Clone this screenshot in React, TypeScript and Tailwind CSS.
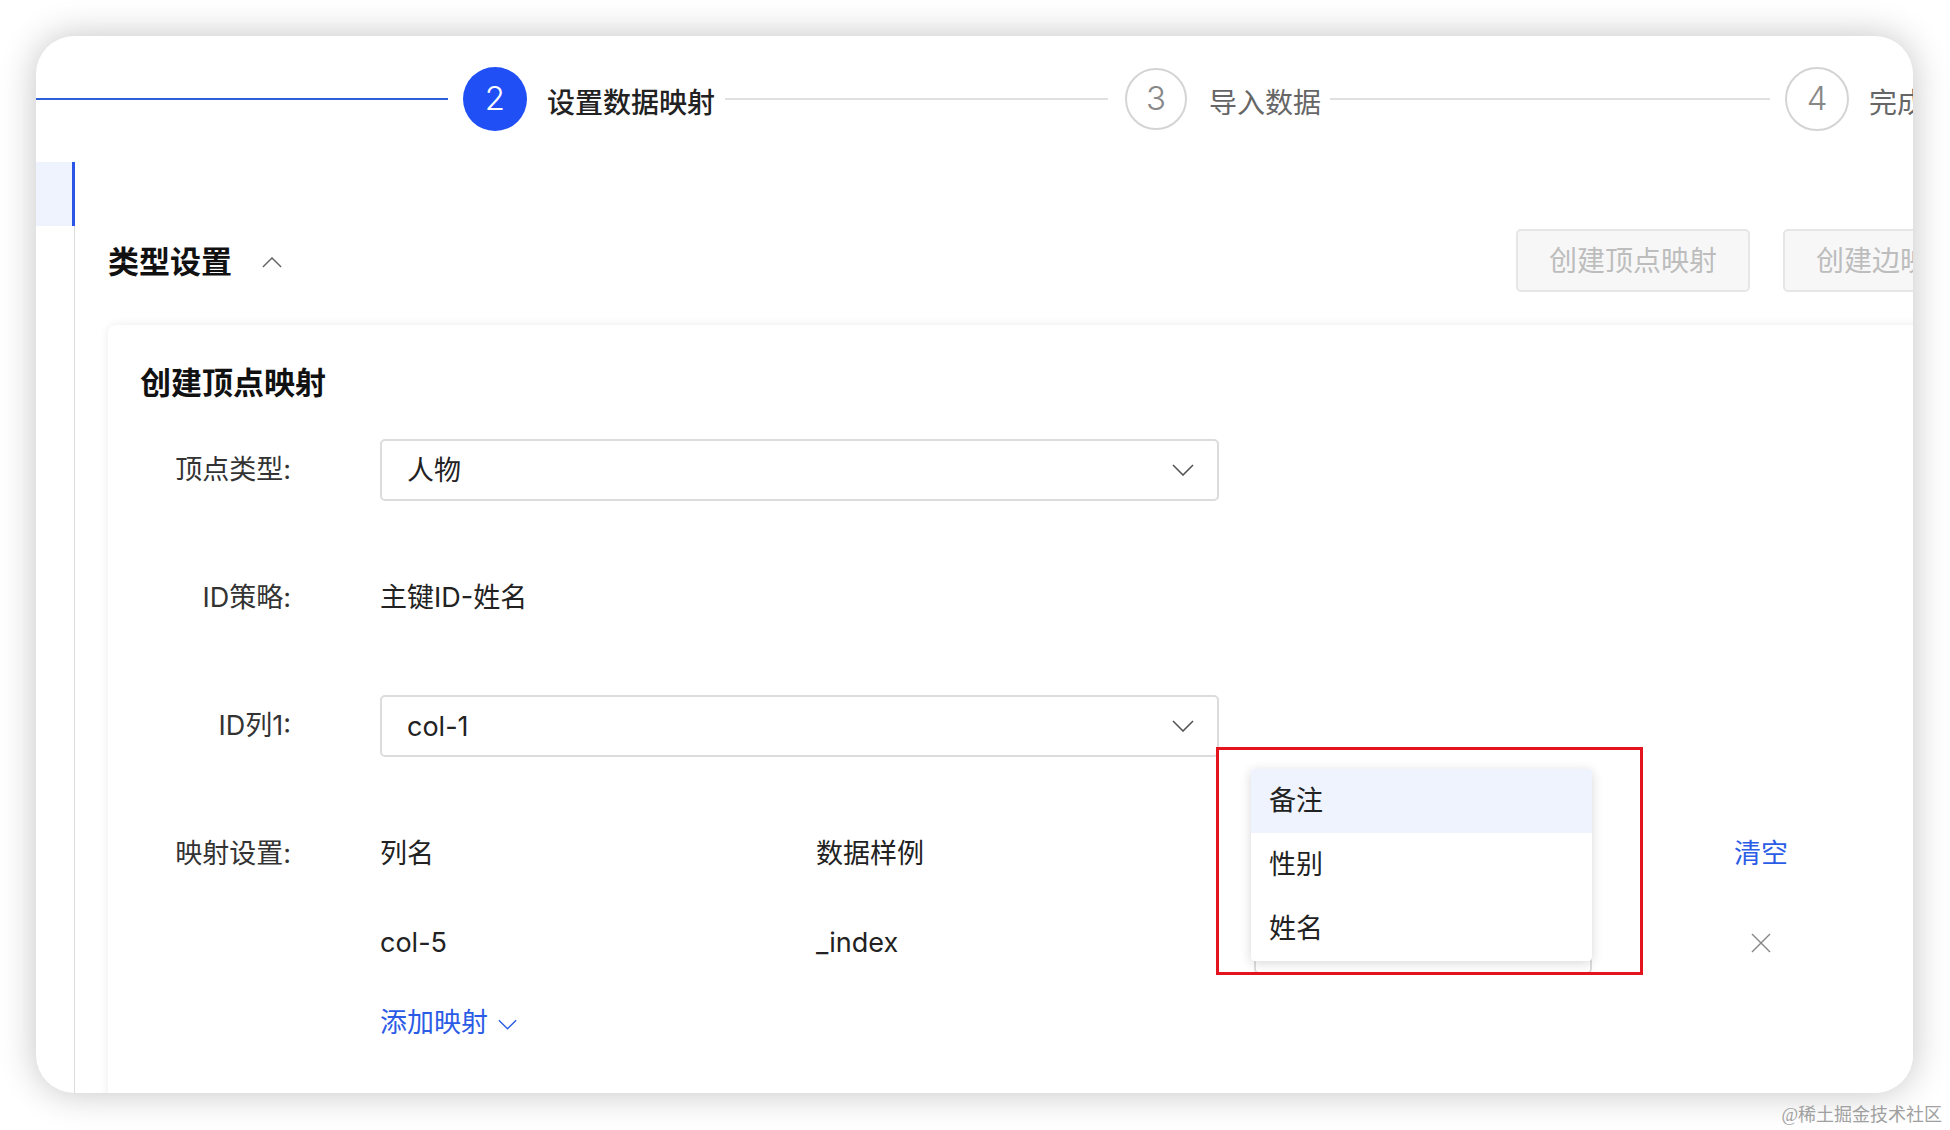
import React from "react";

const ChevronDown = ({ className = "" }: { className?: string }) => (
  <svg viewBox="0 0 22 12" className={className} fill="none" stroke="currentColor" strokeWidth="1.6">
    <polyline points="1,1 11,11 21,1" />
  </svg>
);

const Select = ({ value }: { value: string }) => (
  <div className="flex h-[62px] w-[839px] items-center justify-between rounded-[5px] border-2 border-[#dcdcdc] pl-[25px] pr-[23px] text-[27px] text-[#222]">
    <span className="mt-[2px]">{value}</span>
    <ChevronDown className="h-[12px] w-[22px] text-[#555]" />
  </div>
);

const Row = ({ label, children }: { label: string; children: React.ReactNode }) => (
  <div className="flex h-[62px] items-center">
    <div className="mt-[2px] w-[151px] shrink-0 text-right text-[27px] text-[#333]">{label}</div>
    <div className="ml-[89px] mt-[2px] flex items-center">{children}</div>
  </div>
);

export default function App() {
  return (
    <div className="flex h-[1130px] w-[1950px] flex-col bg-white pl-[36px] pt-[36px] font-['Inter','Noto_Sans_CJK_SC',sans-serif]">
      <div className="h-[1057px] w-[1877px] overflow-hidden rounded-[38px] bg-white shadow-[0_0_36px_rgba(0,0,0,0.24)]">
        {/* steps */}
        <div className="flex h-[126px] items-center whitespace-nowrap">
          <div className="h-[2px] w-[412px] shrink-0 bg-[#2d5fd8]" />
          <div className="ml-[15px] flex h-[64px] w-[64px] shrink-0 items-center justify-center rounded-full bg-[#1f4ff5] text-[33px] font-light text-white">
            2
          </div>
          <span className="ml-[20px] mt-[7px] shrink-0 text-[28px] font-medium text-[#222]">设置数据映射</span>
          <div className="ml-[10px] h-[2px] w-[383px] shrink-0 bg-[#e0e0e0]" />
          <div className="ml-[17px] flex h-[62px] w-[62px] shrink-0 items-center justify-center rounded-full border-2 border-[#d4d4d4] text-[33px] font-light text-[#888]">
            3
          </div>
          <span className="ml-[22px] mt-[7px] shrink-0 text-[28px] text-[#666]">导入数据</span>
          <div className="ml-[9px] h-[2px] w-[440px] shrink-0 bg-[#e0e0e0]" />
          <div className="ml-[15px] flex h-[64px] w-[64px] shrink-0 items-center justify-center rounded-full border-2 border-[#d4d4d4] text-[33px] font-light text-[#888]">
            4
          </div>
          <span className="ml-[20px] mt-[7px] shrink-0 text-[28px] text-[#666]">完成</span>
        </div>

        <div className="flex h-[931px]">
          {/* side nav */}
          <div className="flex w-[39px] shrink-0 flex-col">
            <div className="h-[64px] border-r-[3px] border-[#2a55e5] bg-[#eef3fe]" />
            <div className="flex-1 border-r border-[#dcdcdc]" />
          </div>

          <div className="ml-[33px] w-[1881px] shrink-0">
            <div className="mt-[67px] flex h-[63px] items-center justify-between">
              <div className="mt-[4px] flex items-center">
                <h2 className="text-[31px] font-bold text-[#111]">类型设置</h2>
                <svg viewBox="0 0 22 12" className="ml-[30px] h-[11px] w-[20px] text-[#666]" fill="none" stroke="currentColor" strokeWidth="1.6">
                  <polyline points="1,11 11,1 21,11" />
                </svg>
              </div>
              <div className="flex gap-[33px] whitespace-nowrap">
                <button className="h-[63px] rounded-[5px] border-2 border-[#e6e6e6] bg-[#f7f7f7] px-[31px] text-[28px] text-[#bdbdbd]">
                  创建顶点映射
                </button>
                <button className="h-[63px] rounded-[5px] border-2 border-[#e6e6e6] bg-[#f7f7f7] px-[31px] text-[28px] text-[#bdbdbd]">
                  创建边映射
                </button>
              </div>
            </div>

            <div className="mt-[33px] h-[800px] rounded-tl-[8px] bg-white pl-[32px] pt-[38px] shadow-[0_0_10px_rgba(0,0,0,0.08)]">
              <h3 className="mb-[35px] text-[31px] font-bold leading-[40px] text-[#111]">创建顶点映射</h3>

              <div className="flex flex-col gap-[66px]">
                <Row label="顶点类型:">
                  <Select value="人物" />
                </Row>
                <Row label="ID策略:">
                  <span className="text-[27px] text-[#222]">主键ID-姓名</span>
                </Row>
                <Row label="ID列1:">
                  <Select value="col-1" />
                </Row>
                <Row label="映射设置:">
                  <div className="w-[436px] text-[27px] text-[#222]">列名</div>
                  <div className="w-[438px] text-[27px] text-[#222]">数据样例</div>
                  <div className="w-[446px]" />
                  <div className="w-[122px] text-center text-[27px] text-[#2b5ce6]">清空</div>
                </Row>
              </div>

              <div className="mt-[27px]">
                <Row label="">
                  <div className="w-[436px] text-[27px] text-[#222]">col-5</div>
                  <div className="w-[438px] text-[27px] text-[#222]">_index</div>
                  <div className="relative w-[446px]">
                    <div className="h-[62px] w-[338px] rounded-[5px] border-2 border-[#dcdcdc]" />
                    <div className="pointer-events-none absolute left-[-38px] top-[-165px] h-[228px] w-[427px] border-[3px] border-[#e4141f]" />
                    <div className="absolute left-[-3px] top-[-143px] w-[341px] overflow-hidden rounded-[4px] bg-white shadow-[0_2px_12px_rgba(0,0,0,0.16)]">
                      <div className="flex h-[64px] items-center bg-[#eef3fd] pl-[18px] text-[27px] text-[#222]">备注</div>
                      <div className="flex h-[64px] items-center pl-[18px] text-[27px] text-[#222]">性别</div>
                      <div className="flex h-[64px] items-center pl-[18px] text-[27px] text-[#222]">姓名</div>
                    </div>
                  </div>
                  <div className="flex w-[122px] justify-center">
                    <svg viewBox="0 0 20 20" className="h-[20px] w-[20px] text-[#888]" fill="none" stroke="currentColor" strokeWidth="1.5">
                      <line x1="1" y1="1" x2="19" y2="19" />
                      <line x1="19" y1="1" x2="1" y2="19" />
                    </svg>
                  </div>
                </Row>
              </div>

              <div className="mt-[18px]">
                <Row label="">
                  <span className="text-[27px] text-[#2b5ce6]">添加映射</span>
                  <ChevronDown className="ml-[10px] mt-[2px] h-[11px] w-[19px] text-[#2b5ce6]" />
                </Row>
              </div>
            </div>
          </div>
        </div>
      </div>
      <div className="mt-[9px] pr-[8px] text-right font-['Liberation_Serif','Noto_Sans_CJK_SC',serif] text-[18px] text-[#a0a0a0]">
        @稀土掘金技术社区
      </div>
    </div>
  );
}
